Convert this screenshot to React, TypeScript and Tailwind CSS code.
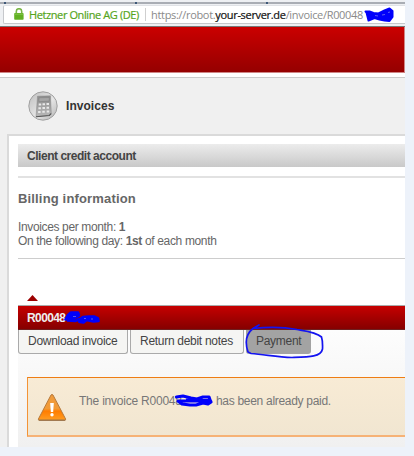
import React from "react";

function Padlock() {
  return (
    <svg width="10" height="12" viewBox="0 0 10 12" className="relative -top-px shrink-0">
      <path d="M2.3 6V3.4a2.7 2.7 0 0 1 5.4 0V6" fill="none" stroke="#7ab648" strokeWidth="1.6" />
      <rect x="0.2" y="5" width="9.4" height="6.8" rx="0.8" fill="#62b022" />
      <path d="M1 6.2h8" stroke="#8cca55" strokeWidth="0.8" />
    </svg>
  );
}

function AddressBar() {
  return (
    <div className="h-[27px] border-b border-[#777] bg-[#eef0f3]">
      <div className="flex h-[5px] flex-col pt-[2px]">
        <div className="flex h-[2px] bg-[#a9adb4] pl-1">
          <i className="mr-[129px] h-[2px] w-[2px] bg-[#3e5878]" />
          <i className="mr-[129px] h-[2px] w-[2px] bg-[#3e5878]" />
          <i className="mr-[129px] h-[2px] w-[2px] bg-[#3e5878]" />
        </div>
      </div>
      <div className="relative ml-[3px] flex h-[19px] items-center rounded-l-[2px] border-y border-l border-[#c6c8cc] border-t-[#e0e2e6] bg-white pl-[10px] font-['Open_Sans',sans-serif] text-[11px] leading-[18px] whitespace-nowrap">
        <Padlock />
        <span className="ml-[5px] w-[116px] tracking-[-0.4px] text-[#55a51c] [-webkit-text-stroke:0.2px_#55a51c]">Hetzner Online AG (DE)</span>
        <i className="h-[13px] w-px bg-[#cfcfcf]" />
        <span className="ml-[5px] tracking-[-0.32px] text-[#8a8a8a]">
          https://robot.<span className="text-[#111] [-webkit-text-stroke:0.2px_#111]">your-server.de</span>/invoice/R00048
        </span>
        <svg className="absolute top-0 left-[359px]" width="34" height="18" viewBox="0 0 34 18">
          <path d="M2.5 5.500h4l4 1.500 5 .5 6-3 5-2 3 2.500v6l-3 4-5-.5-5-1-5-1.500-6 2.500-2-8z" fill="#0000fb" stroke="#0000fb" strokeWidth="2" strokeLinejoin="round" />
          <path d="M12 9.500l3 .5M19 9l3-.5M25 6.500l2-.5" stroke="#6a6af0" strokeWidth="0.9" />
        </svg>
      </div>
    </div>
  );
}

function CalculatorIcon() {
  return (
    <svg width="30" height="30" viewBox="0 0 30 30">
      <defs>
        <linearGradient id="disc" x1="0" y1="0" x2="1" y2="1">
          <stop offset="0" stopColor="#bdbdbd" />
          <stop offset="0.55" stopColor="#e6e6e6" />
          <stop offset="1" stopColor="#b2b2b2" />
        </linearGradient>
        <linearGradient id="calc" x1="0" y1="0" x2="0" y2="1">
          <stop offset="0" stopColor="#8c8c8c" />
          <stop offset="1" stopColor="#b8b8b8" />
        </linearGradient>
      </defs>
      <circle cx="15" cy="15" r="14.2" fill="url(#disc)" stroke="#a0a0a0" />
      <path d="M9.5 5.2 22.5 4.8l.8 17.5-2 2-13.3 1.5z" fill="url(#calc)" stroke="#888" strokeWidth="0.5" />
      <path d="M8 25.8 21.3 24.5l2-2" fill="none" stroke="#555" strokeWidth="1.1" />
      <path d="m11 6.800 10.300-.3v3.600l-10.400.6z" fill="#a5a5a5" stroke="#7c7c7c" strokeWidth="0.5" />
      <g fill="#e8e8e8">
        <path d="M10.7 12.5h2.5v2h-2.5zM14.5 12.3H17v2h-2.5zM18.5 12.1H21v2h-2.5zM10.4 16.2h2.5v2h-2.5zM14.4 16H17v2h-2.5zM18.6 15.8H21v2h-2.5zM10.1 19.9h2.5v2h-2.5zM14.3 19.7h2.5v2h-2.5zM18.7 19.5h2.5v2h-2.5z" />
      </g>
    </svg>
  );
}

function WarningIcon() {
  return (
    <svg width="30" height="29" viewBox="0 0 30 29" className="shrink-0">
      <defs>
        <linearGradient id="warn" x1="0" y1="0" x2="0" y2="1">
          <stop offset="0" stopColor="#ef9b3d" />
          <stop offset="0.55" stopColor="#f29a35" />
          <stop offset="0.65" stopColor="#ff7d00" />
          <stop offset="1" stopColor="#ff9d22" />
        </linearGradient>
      </defs>
      <path d="M14 2Q15 .8 16 2l12.6 24q.3 1.2-.8 1.2H2.2q-1.1 0-.8-1.2z" fill="url(#warn)" stroke="#b77a3c" strokeWidth="1" />
      <path d="M1.8 27.2h26.4" stroke="#8e6d4c" strokeWidth="1" />
      <path d="M13.2 10h3.6l-.6 9h-2.4z" fill="#fff" />
      <circle cx="15" cy="21.8" r="1.7" fill="#fff" />
    </svg>
  );
}

export default function App() {
  return (
    <div className="h-[456px] w-[414px] overflow-hidden bg-[#edf2fa] font-['Liberation_Sans',Arial,sans-serif] whitespace-nowrap">
      <div className="flex h-[447px] w-[405px] flex-col overflow-hidden bg-[#f0f0f0]">
        <AddressBar />
        <div className="h-[46px] shrink-0 border-r border-b border-[#cf8585] bg-linear-to-b from-[#cb0000] to-[#950000]" />
        <div className="h-[5px] shrink-0 border-b border-[#cbcbcb] bg-white" />
        <div className="flex h-[56px] shrink-0 items-center gap-[8px] pl-[28px]">
          <CalculatorIcon />
          <h1 className="text-[12px] leading-[16px] font-bold tracking-[0.05px] text-[#333]">Invoices</h1>
        </div>
        <main className="ml-[7px] grow border-t-2 border-l-2 border-[#dadada] bg-white pl-[9px]">
          <div className="mt-[8px] h-[23px] bg-linear-to-b from-[#ececec] to-[#c9c9c9] pl-[9px] text-[12px] leading-[24px] font-bold text-[#444]">
            <span className="tracking-[-0.47px]">Client credit account</span>
          </div>
          <section className="mt-[9px] h-[83px] border-t-2 border-b border-t-[#e2e2e2] border-b-[#cdcdcd] pt-[13px] text-[12px] leading-[14px] text-[#666]">
            <h2 className="mb-[13px] text-[13px] leading-[16px] font-bold tracking-[0.16px]">Billing information</h2>
            <p className="tracking-[-0.36px]">Invoices per month: <b>1</b></p>
            <p className="tracking-[-0.35px]">On the following day: <b>1st</b> of each month</p>
          </section>
          <div className="h-[46px] pt-[36px] pl-[9px]">
            <svg className="block" width="11" height="6"><path d="M0 6 5.5 0 11 6z" fill="#9c0000" /></svg>
          </div>
          <div className="relative h-[25px] border-t border-b border-t-[#aaa] border-b-[#6f2020] bg-linear-to-b from-[#c60000] to-[#860000] pl-[9px] text-[12px] leading-[24px] font-bold tracking-[-0.6px] text-[#eee]">
            R00048
            <svg className="absolute top-[3px] left-[44px]" width="40" height="16" viewBox="0 0 40 16">
              <path d="M3.5 10.5 6 6l3-2.500h7l1 3-5 3-6 2 7 .5 5-2 3-2 6-.5 5 0 4 2 .5 2.500-5 .5-7-1.500-3 2.500-4-.5-1-3 8 0 9 0" fill="#0000fb" stroke="#0000fb" strokeWidth="2.600" strokeLinecap="round" strokeLinejoin="round" />
              <path d="M11 7.500h3M22 9.500h2M29 10h2" stroke="#6060e8" strokeWidth="0.9" />
            </svg>
          </div>
          <div className="h-[117px] bg-linear-to-b from-[#fdfdfd] to-[#f0f0f0]">
            <div className="relative flex h-[47px] items-start gap-[2px] text-[12px] leading-[22px] tracking-[-0.29px] text-[#444]">
              <div className="h-[24px] w-[110px] rounded-b-[3px] border border-t-0 border-[#aaa] bg-[#f5f5f3] pl-[9px]">Download invoice</div>
              <div className="h-[24px] w-[114px] rounded-b-[3px] border border-t-0 border-[#aaa] bg-[#f5f5f3] pl-[9px]">Return debit notes</div>
              <div className="h-[24px] w-[65px] rounded-b-[3px] bg-[#a3a3a3] pl-[10px]">Payment</div>
              <svg className="absolute top-[-7px] left-[226px]" width="84" height="38" viewBox="0 0 84 38">
                <path d="M15 2 9 5.5C2 11 1 20 4 29l3 1.500c14 1 26 3.500 41 4 17-.5 29-.5 30.500-8.500.2-5 0-9-1-12C72 9 62 8 53 6.500 40 4 22 4 9 5.500" fill="none" stroke="#1414f0" strokeWidth="1.700" strokeLinecap="round" />
              </svg>
            </div>
            <div className="ml-[9px] flex h-[60px] border-t border-b-2 border-l border-t-[#ee7d14] border-l-[#f39337] border-b-[#f6b276] bg-linear-to-b from-[#f8ebd5] to-[#f1e6d1] pl-[9px]">
              <div className="pt-[15px]"><WarningIcon /></div>
              <p className="relative ml-[12px] flex pt-[14px] text-[12px] leading-[18px] text-[#777]">
                <span className="w-[137px] tracking-[-0.22px]">The invoice R00048</span>
                <span className="tracking-[-0.3px]">has been already paid.</span>
                <svg className="absolute top-[15px] left-[95px]" width="40" height="16" viewBox="0 0 40 16">
                  <path d="M2.500 4 9 3l8 2 6 1 6-2 6 0 1 3 1 2-3 2-5-1-7 2-6 0-8-1-4-3 7 0 7 0 9 0 7 0" fill="none" stroke="#0000fb" strokeWidth="3.200" strokeLinecap="round" strokeLinejoin="round" />
                  <path d="M12 6.500h6l10 .5h6" stroke="#0000fb" strokeWidth="2" />
                </svg>
              </p>
            </div>
          </div>
        </main>
      </div>
    </div>
  );
}
